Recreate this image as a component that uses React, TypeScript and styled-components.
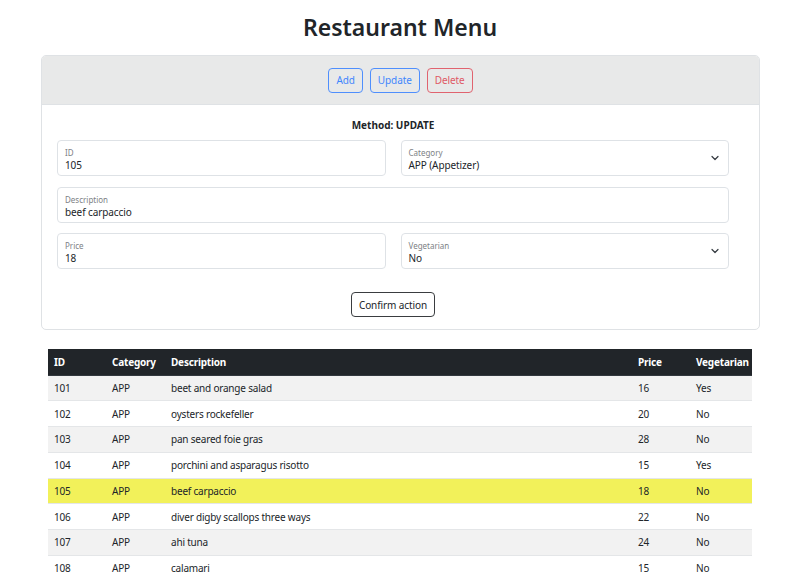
import React from "react";
import styled, { createGlobalStyle } from "styled-components";

const Global = createGlobalStyle`
  html, body { margin: 0; padding: 0; background: #fff; }
  body { font-family: "Noto Sans", "Open Sans", sans-serif; color: #212529; }
  * { box-sizing: border-box; }
`;

const Page = styled.div`
  display: flex;
  flex-direction: column;
  padding-top: 9px;
`;

const Title = styled.h1`
  margin: 0;
  text-align: center;
  font-size: 23px;
  font-weight: 600;
  line-height: 36px;
  color: #212529;
`;

const Card = styled.section`
  margin: 10px 40px 0 41px;
  border: 1px solid #dfe2e5;
  border-radius: 5px;
  overflow: hidden;
`;

const CardHeader = styled.div`
  height: 49px;
  background: #e8e9e9;
  border-bottom: 1px solid #dfe2e5;
  display: flex;
  justify-content: center;
  align-items: center;
  gap: 7px;
`;

const ActionButton = styled.button<{ $tone: "blue" | "red" | "dark" }>`
  height: 25px;
  padding: 0 7px;
  background: transparent;
  border-radius: 4px;
  font-family: inherit;
  font-size: 10px;
  letter-spacing: -0.1px;
  line-height: 1;
  border: 1px solid
    ${(p) => (p.$tone === "blue" ? "#4f8ffd" : p.$tone === "red" ? "#e0636f" : "#3a3d40")};
  color: ${(p) => (p.$tone === "blue" ? "#3f86fd" : p.$tone === "red" ? "#df5965" : "#212529")};
`;

const CardBody = styled.div`
  padding: 13px 30px 12px 15px;
  display: flex;
  flex-direction: column;
  align-items: stretch;
`;

const Method = styled.div`
  text-align: center;
  font-weight: 700;
  font-size: 10px;
  line-height: 14px;
  margin-bottom: 8px;
`;

const Row = styled.div`
  display: grid;
  grid-template-columns: 1fr 1fr;
  column-gap: 15px;
  margin-bottom: 11px;
`;

const FullRow = styled.div`
  margin-bottom: 10px;
`;

const Field = styled.div`
  position: relative;
  height: 36px;
  border: 1px solid #dee2e6;
  border-radius: 4px;
  padding: 6px 7px 0 7px;
  display: flex;
  flex-direction: column;
`;

const FieldLabel = styled.span`
  font-size: 8px;
  line-height: 11px;
  color: #7d8185;
`;

const FieldValue = styled.span`
  font-size: 10px;
  letter-spacing: -0.1px;
  line-height: 14px;
  color: #212529;
`;

const Chevron = styled.svg`
  position: absolute;
  right: 9px;
  top: 14px;
`;

const Footer = styled.div`
  display: flex;
  justify-content: center;
  padding-top: 12px;
`;

const Table = styled.table`
  margin: 19px 48px 0 48px;
  width: 704px;
  border-collapse: collapse;
  font-size: 10px;
  letter-spacing: -0.2px;
  table-layout: fixed;
`;

const Th = styled.th<{ $w: number }>`
  width: ${(p) => p.$w}px;
  background: #212529;
  color: #fff;
  text-align: left;
  font-weight: 700;
  height: 26px;
  padding: 0 5px 0 6px;
  white-space: nowrap;
  border-bottom: 1px solid #32383e;
`;

const Tr = styled.tr<{ $bg: string }>`
  background: ${(p) => p.$bg};
`;

const Td = styled.td`
  height: 25.75px;
  padding: 0 6px;
  border-bottom: 1px solid #e4e6e8;
  color: #212529;
`;

const rows = [
  ["101", "APP", "beet and orange salad", "16", "Yes"],
  ["102", "APP", "oysters rockefeller", "20", "No"],
  ["103", "APP", "pan seared foie gras", "28", "No"],
  ["104", "APP", "porchini and asparagus risotto", "15", "Yes"],
  ["105", "APP", "beef carpaccio", "18", "No"],
  ["106", "APP", "diver digby scallops three ways", "22", "No"],
  ["107", "APP", "ahi tuna", "24", "No"],
  ["108", "APP", "calamari", "15", "No"],
];

const cols: [string, number][] = [
  ["ID", 58],
  ["Category", 59],
  ["Description", 467],
  ["Price", 58],
  ["Vegetarian", 62],
];

const Arrow = () => (
  <Chevron width="8" height="6" viewBox="0 0 8 6">
    <path d="M1 1.5 L4 4.5 L7 1.5" fill="none" stroke="#343a40" strokeWidth="1.2" strokeLinecap="round" strokeLinejoin="round" />
  </Chevron>
);

export default function App() {
  return (
    <Page>
      <Global />
      <Title>Restaurant Menu</Title>
      <Card>
        <CardHeader>
          <ActionButton $tone="blue">Add</ActionButton>
          <ActionButton $tone="blue">Update</ActionButton>
          <ActionButton $tone="red">Delete</ActionButton>
        </CardHeader>
        <CardBody>
          <Method>Method: UPDATE</Method>
          <Row>
            <Field>
              <FieldLabel>ID</FieldLabel>
              <FieldValue>105</FieldValue>
            </Field>
            <Field>
              <FieldLabel>Category</FieldLabel>
              <FieldValue>APP (Appetizer)</FieldValue>
              <Arrow />
            </Field>
          </Row>
          <FullRow>
            <Field>
              <FieldLabel>Description</FieldLabel>
              <FieldValue>beef carpaccio</FieldValue>
            </Field>
          </FullRow>
          <Row>
            <Field>
              <FieldLabel>Price</FieldLabel>
              <FieldValue>18</FieldValue>
            </Field>
            <Field>
              <FieldLabel>Vegetarian</FieldLabel>
              <FieldValue>No</FieldValue>
              <Arrow />
            </Field>
          </Row>
          <Footer>
            <ActionButton $tone="dark">Confirm action</ActionButton>
          </Footer>
        </CardBody>
      </Card>
      <Table>
        <thead>
          <tr>
            {cols.map(([c, w]) => (
              <Th key={c} $w={w}>{c}</Th>
            ))}
          </tr>
        </thead>
        <tbody>
          {rows.map((r, i) => (
            <Tr key={r[0]} $bg={r[0] === "105" ? "#f2f15a" : i % 2 === 0 ? "#f2f2f2" : "#ffffff"}>
              {r.map((v, j) => (
                <Td key={j}>{v}</Td>
              ))}
            </Tr>
          ))}
        </tbody>
      </Table>
    </Page>
  );
}
